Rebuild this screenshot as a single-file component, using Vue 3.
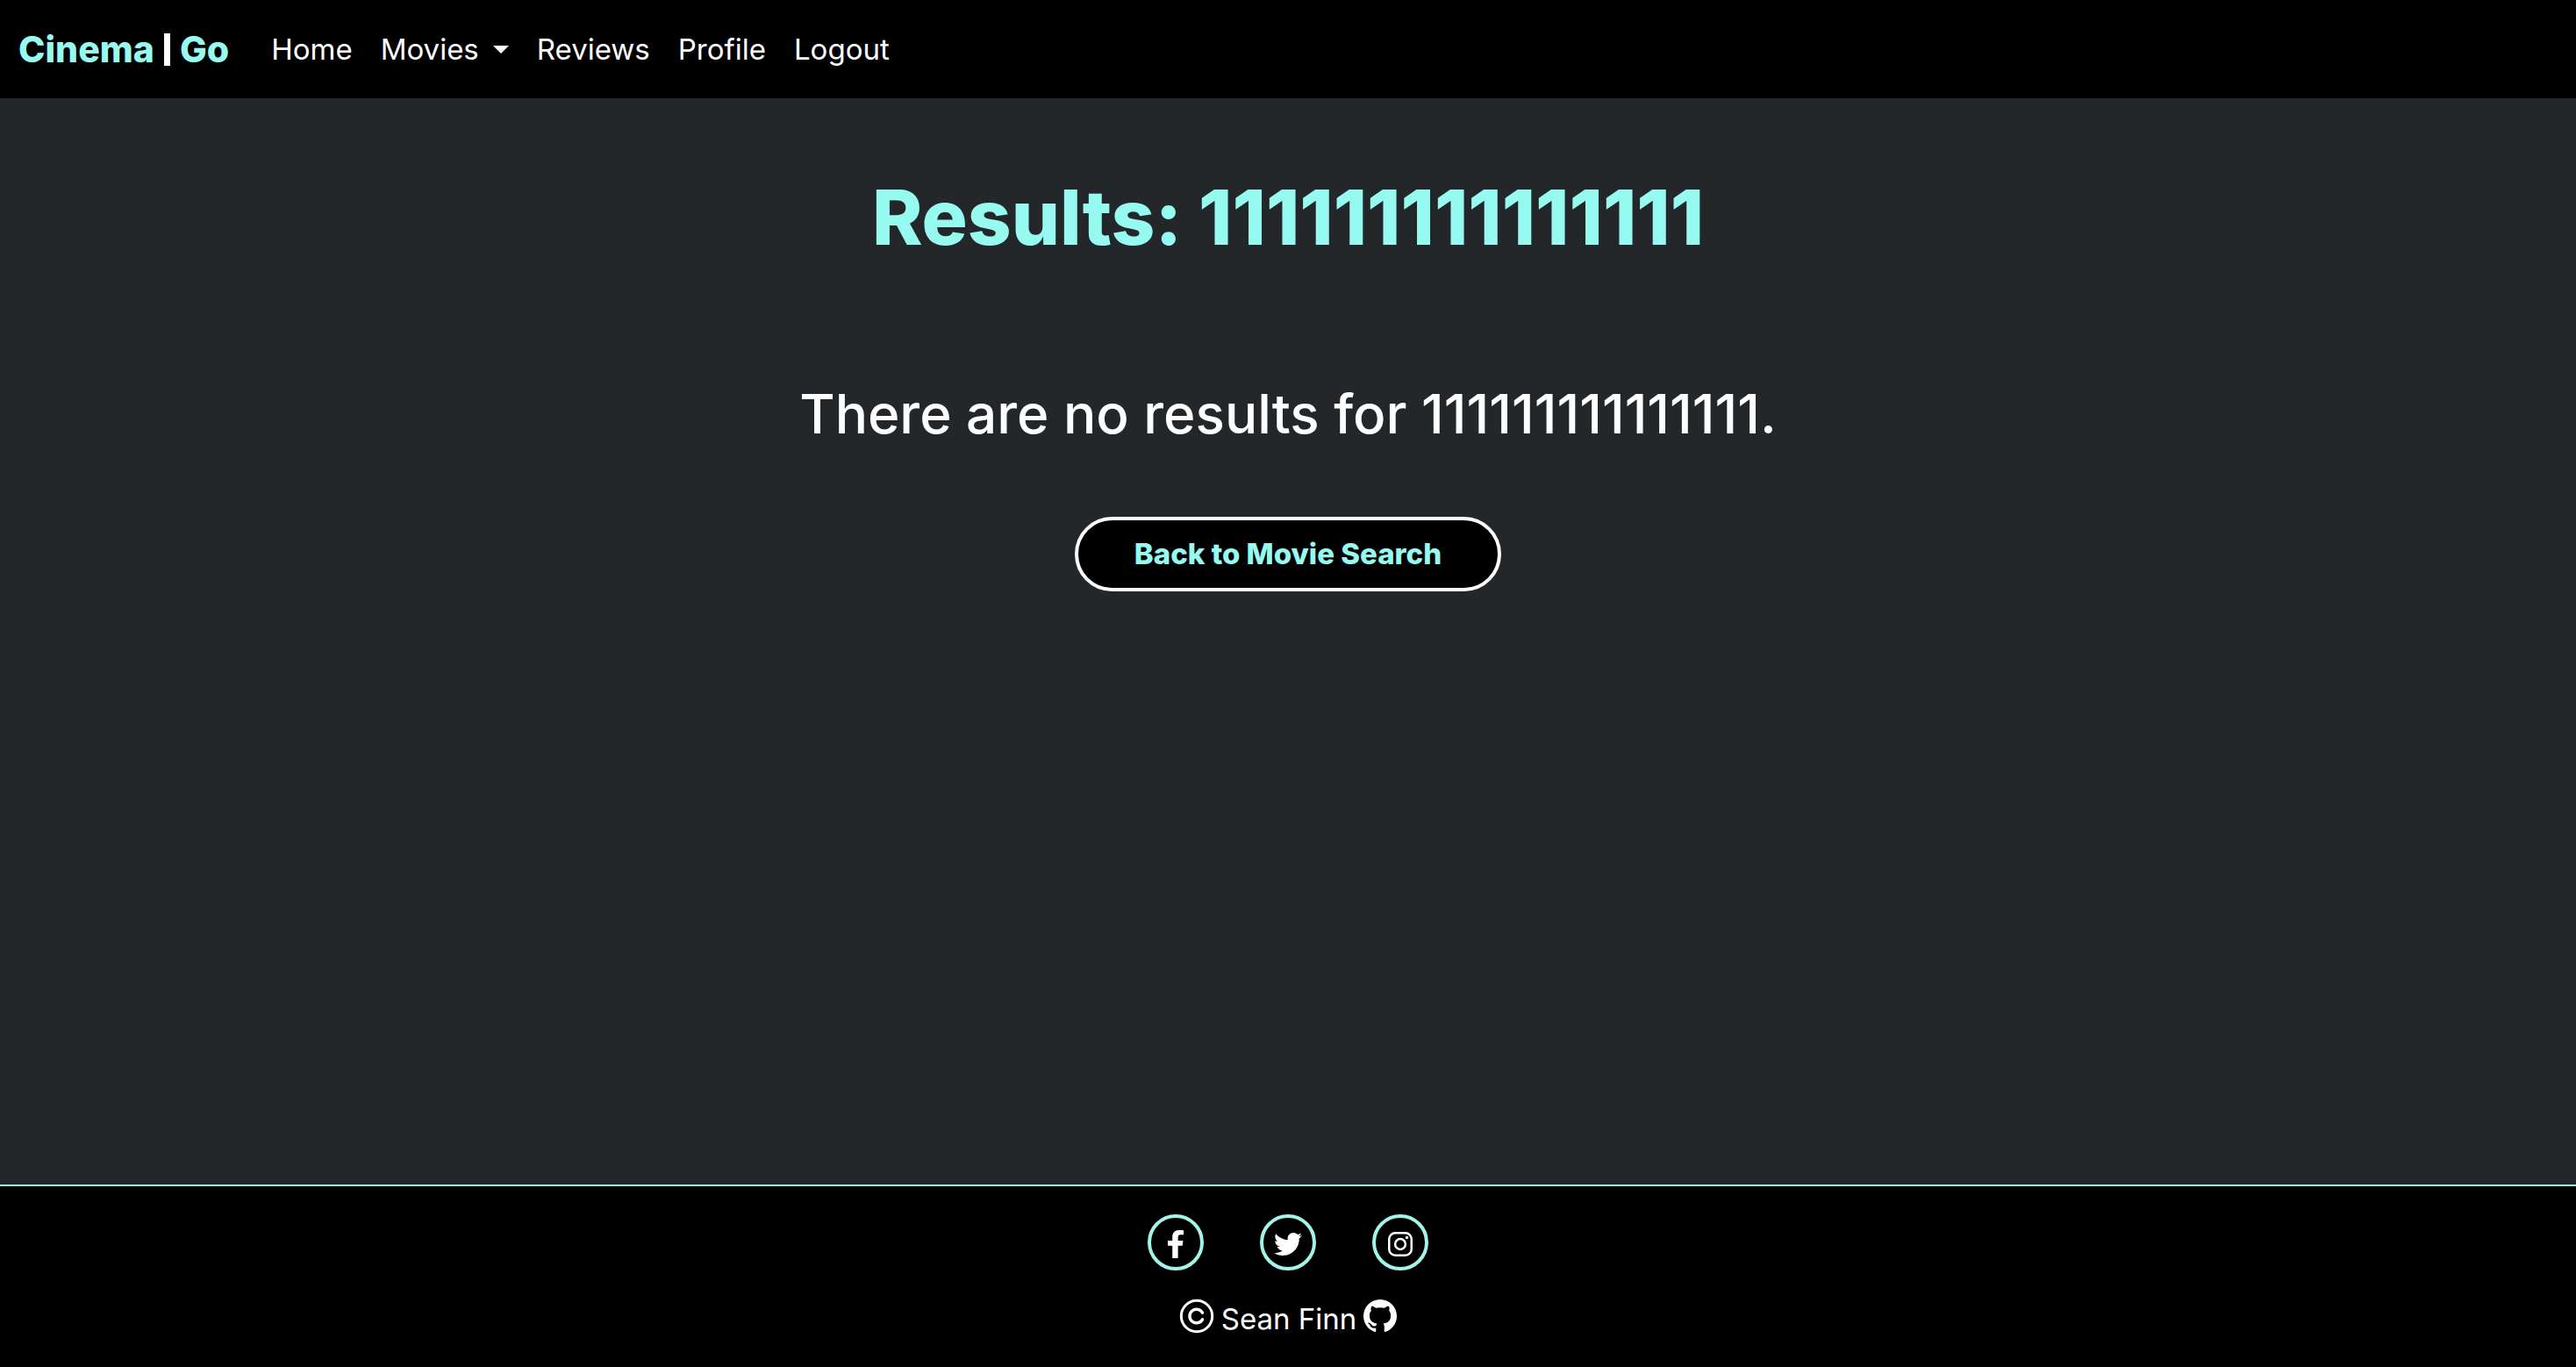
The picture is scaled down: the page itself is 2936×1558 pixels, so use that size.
<script setup>
const query = '111111111111111'
const movieLinks = ['Movies']
</script>

<template>
  <div class="page">
    <header class="navbar">
      <a class="brand" href="#"><span>Cinema</span><span class="divider" aria-hidden="true"></span><span>Go</span></a>
      <nav class="links" aria-label="Main">
        <a href="#">Home</a>
        <button v-for="label in movieLinks" :key="label" type="button" class="dropdown" aria-haspopup="true">
          {{ label }}<span class="caret"></span>
        </button>
        <a href="#">Reviews</a>
        <a href="#">Profile</a>
        <a href="#">Logout</a>
      </nav>
    </header>

    <main class="content">
      <h1>Results: {{ query }}</h1>
      <h2>There are no results for {{ query }}.</h2>
      <button type="button" class="back">Back to Movie Search</button>
    </main>

    <footer class="footer">
      <div class="social">
        <a href="#" aria-label="Facebook">
          <svg width="18" height="32" viewBox="0 0 264 512" preserveAspectRatio="none"><path fill="currentColor" d="M76.7 512V283H0v-91h76.7v-71.7C76.7 42.4 124.3 0 193.8 0c33.3 0 61.9 2.500 70.200 3.600V85h-48.200c-37.800 0-45.100 18-45.100 44.300V192H256l-11.700 91h-73.600v229"/></svg>
        </a>
        <a href="#" aria-label="Twitter">
          <svg width="32" height="32" viewBox="0 0 512 512"><path fill="currentColor" d="M459.37 151.716c.325 4.548.325 9.097.325 13.645 0 138.72-105.583 298.558-298.558 298.558-59.452 0-114.680-17.219-161.137-47.106 8.447.974 16.568 1.299 25.340 1.299 49.055 0 94.213-16.568 130.274-44.832-46.132-.975-84.792-31.188-98.112-72.772 6.498.974 12.995 1.624 19.818 1.624 9.421 0 18.843-1.300 27.614-3.573-48.081-9.747-84.143-51.980-84.143-102.985v-1.299c13.969 7.797 30.214 12.670 47.431 13.319-28.264-18.843-46.781-51.005-46.781-87.391 0-19.492 5.197-37.360 14.294-52.954 51.655 63.675 129.300 105.258 216.365 109.807-1.624-7.797-2.599-15.918-2.599-24.040 0-57.828 46.782-104.934 104.934-104.934 30.213 0 57.502 12.670 76.670 33.137 23.715-4.548 46.456-13.320 66.599-25.340-7.798 24.366-24.366 44.833-46.132 57.827 21.117-2.273 41.584-8.122 60.426-16.243-14.292 20.791-32.161 39.308-52.628 54.253z"/></svg>
        </a>
        <a href="#" aria-label="Instagram">
          <svg width="28" height="28" viewBox="0 0 28 28" fill="none" stroke="currentColor" stroke-width="2.500"><rect x="1.250" y="1.250" width="25.500" height="25.500" rx="7"/><circle cx="14" cy="14" r="5.900"/><circle cx="21.500" cy="6.500" r="1.700" fill="currentColor" stroke="none"/></svg>
        </a>
      </div>
      <p class="credit">
        <svg width="40" height="40" viewBox="0 0 40 40" fill="none" stroke="currentColor" stroke-width="3"><circle cx="20" cy="20" r="17.700"/><path stroke-width="3.400" d="M26.500 16.200A7.800 7.800 0 1 0 26.500 23.800" stroke-linecap="round"/></svg>
        <span class="author">Sean Finn</span>
        <a href="#" aria-label="GitHub">
          <svg width="38" height="38" viewBox="0 0 16 16"><path fill="currentColor" d="M8 0C3.580 0 0 3.580 0 8c0 3.540 2.290 6.530 5.470 7.590.4.070.55-.17.55-.38 0-.19-.01-.82-.01-1.490-2.010.37-2.530-.49-2.690-.94-.09-.23-.48-.94-.82-1.130-.28-.15-.68-.52-.01-.53.63-.01 1.080.58 1.230.82.72 1.210 1.870.87 2.330.66.07-.52.28-.87.51-1.070-1.780-.2-3.640-.89-3.640-3.950 0-.87.31-1.590.82-2.150-.08-.2-.36-1.020.08-2.120 0 0 .67-.21 2.200.82.64-.18 1.320-.27 2-.27s1.360.09 2 .27c1.530-1.040 2.200-.82 2.200-.82.44 1.100.16 1.920.08 2.120.51.56.82 1.270.82 2.150 0 3.070-1.870 3.750-3.650 3.950.29.25.54.73.54 1.480 0 1.070-.01 1.930-.01 2.200 0 .21.15.46.55.38A8.010 8.010 0 0 0 16 8c0-4.420-3.580-8-8-8z"/></svg>
        </a>
      </p>
    </footer>
  </div>
</template>

<style>
body {
  margin: 0;
  background: #23272a;
}
</style>

<style scoped>
.page {
  --aqua: #96faf1;
  display: flex;
  flex-direction: column;
  min-height: 100vh;
  color: #fff;
  font-family: Inter, "Open Sans", sans-serif;
}

a {
  color: inherit;
  text-decoration: none;
}

button {
  font-family: inherit;
  cursor: pointer;
}

.navbar {
  display: flex;
  align-items: center;
  gap: 32px;
  padding: 16px 21px;
  background: #000;
}

.brand {
  display: flex;
  align-items: center;
  gap: 11px;
  color: var(--aqua);
  font-size: 41px;
  font-weight: 800;
  line-height: 80px;
}

.divider {
  width: 7px;
  height: 37px;
  background: #fff;
}

.links {
  display: flex;
  align-items: center;
}

.links a,
.dropdown {
  padding: 0 16px;
  border: 0;
  background: none;
  color: #fff;
  font-size: 33px;
  font-weight: 400;
  line-height: 48px;
}

.dropdown {
  display: flex;
  align-items: center;
  gap: 16px;
}

.caret {
  border: 9px solid transparent;
  border-top-color: #fff;
  border-bottom: 0;
}

.content {
  flex: 1;
  display: flex;
  flex-direction: column;
  align-items: center;
  padding: 64px 24px;
  text-align: center;
}

h1,
h2 {
  margin: 0;
}

h1 {
  color: var(--aqua);
  font-size: 87px;
  font-weight: 800;
  line-height: 144px;
}

h2 {
  margin-top: 104px;
  font-size: 62px;
  font-weight: 500;
  line-height: 96px;
}

.back {
  margin-top: 69px;
  padding: 0 64px;
  border: 4px solid #fff;
  border-radius: 44px;
  background: #000;
  color: var(--aqua);
  font-size: 33px;
  font-weight: 800;
  line-height: 77px;
}

.footer {
  display: flex;
  flex-direction: column;
  align-items: center;
  gap: 25px;
  padding: 32px 24px 31px;
  border-top: 2px solid #a3f3ea;
  background: #000;
}

.social {
  display: flex;
  gap: 64px;
}

.social a {
  display: flex;
  align-items: center;
  justify-content: center;
  box-sizing: border-box;
  width: 64px;
  height: 64px;
  padding-top: 4px;
  border: 4px solid #a3f3ea;
  border-radius: 50%;
}

.credit {
  display: flex;
  align-items: center;
  gap: 8px;
  margin: 0;
  font-size: 33px;
  line-height: 48px;
}

.author {
  padding-top: 6px;
}

.credit svg {
  display: block;
}
</style>
